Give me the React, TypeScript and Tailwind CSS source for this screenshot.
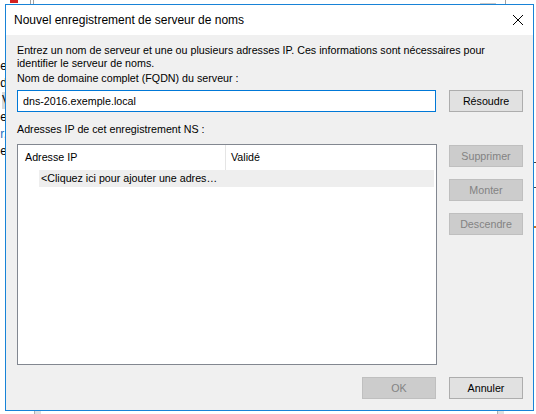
import React from 'react';

const font = { fontFamily: '"Liberation Sans", Arial, sans-serif' };

const Btn: React.FC<{ label: string; disabled?: boolean }> = ({ label, disabled }) => (
  <div
    className={
      disabled
        ? 'w-[74px] h-[22px] flex items-center justify-center border border-[#bfbfbf] bg-[#cccccc] text-[#838383]'
        : 'w-[74px] h-[22px] flex items-center justify-center border border-[#adadad] bg-[#e1e1e1] text-black'
    }
  >
    {label}
  </div>
);

export default function App() {
  return (
    <div className="relative w-[536px] h-[414px] overflow-hidden bg-white pt-[4px] pl-[5px]" style={font}>
      {/* what peeks out from behind the dialog */}
      <div className="absolute left-[10px] top-0 w-[8px] h-[3px] bg-[#d42020]" />
      <div className="absolute left-[30px] top-0 w-px h-[4px] bg-[#a0a0a0]" />
      <div className="absolute left-[33px] top-0 w-px h-[4px] bg-[#a0a0a0]" />
      <div className="absolute left-[480px] top-[3px] w-[16px] h-px bg-[#c8c8c8]" />
      <div className="absolute left-[505px] top-0 w-px h-[4px] bg-[#a0a0a0]" />
      <div className="absolute left-[34px] top-[411px] w-[7px] h-[3px] bg-[#e0e0e0] border-l border-[#b0b0b0]" />
      <div className="absolute left-[497px] top-[411px] w-[7px] h-[3px] bg-[#e0e0e0] border-l border-[#b0b0b0]" />
      <div className="absolute left-[534px] top-[162px] w-[2px] h-px bg-[#404040]" />
      <div className="absolute left-[534px] top-[187px] w-[2px] h-px bg-[#404040]" />
      <div className="absolute left-[534px] top-[226px] w-[2px] h-[2px] bg-[#c87020]" />
      <div className="absolute left-0 top-[58px] w-[5px] flex flex-col items-end text-[12px] leading-[17px] text-black overflow-hidden">
        <span className="-mr-[2px]">e</span>
        <span className="-mr-[2px]">d</span>
        <span className="-mr-[2px] bg-[#d8d8d8] w-[5px]">V</span>
        <span className="-mr-[2px]">e</span>
        <span className="-mr-[2px] text-[#1a6fc0]">r,</span>
        <span className="-mr-[2px]">e</span>
      </div>

      {/* dialog */}
      <div className="relative w-[529px] h-[407px] border border-[#1883d7] flex flex-col">
        <div className="h-[30px] bg-white flex items-center justify-between pl-[8px] pr-[8px]">
          <span className="text-[12px] text-black">Nouvel enregistrement de serveur de noms</span>
          <svg width="12" height="12" viewBox="0 0 12 12" className="mr-[1px]">
            <path d="M1 1L11 11M11 1L1 11" stroke="#000" strokeWidth="1" fill="none" />
          </svg>
        </div>

        <div className="flex-1 bg-[#f0f0f0] pl-[11px] pr-[10px] pt-[9px] flex flex-col text-[10.7px] leading-[13px] text-black">
          <p>
            Entrez un nom de serveur et une ou plusieurs adresses IP. Ces informations sont nécessaires pour
            <br />
            identifier le serveur de noms.
          </p>
          <p className="mt-[2px]">Nom de domaine complet (FQDN) du serveur :</p>

          <div className="mt-[5px] flex items-start gap-[13px]">
            <div className="w-[420px] h-[22px] border border-[#0078d7] bg-white flex items-center pl-[5px]">
              dns-2016.exemple.local
            </div>
            <Btn label="Résoudre" />
          </div>

          <p className="mt-[11px]">Adresses IP de cet enregistrement NS :</p>

          <div className="mt-[8px] flex items-start gap-[12px]">
            <div className="w-[421px] h-[221px] border border-[#828790] bg-white">
              <div className="h-[25px] flex items-center">
                <div className="w-[208px] h-full flex items-center pl-[7px] border-r border-[#e5e5e5]">Adresse IP</div>
                <div className="pl-[5px]">Validé</div>
              </div>
              <div className="ml-[21px] mr-[2px] h-[17px] bg-[#eeeeee] flex items-center pl-[2px]">
                &lt;Cliquez ici pour ajouter une adres…
              </div>
            </div>
            <div className="pt-[1px] flex flex-col gap-[12px]">
              <Btn label="Supprimer" disabled />
              <Btn label="Monter" disabled />
              <Btn label="Descendre" disabled />
            </div>
          </div>

          <div className="mt-[12px] flex justify-end gap-[13px]">
            <Btn label="OK" disabled />
            <Btn label="Annuler" />
          </div>
        </div>
      </div>
    </div>
  );
}
